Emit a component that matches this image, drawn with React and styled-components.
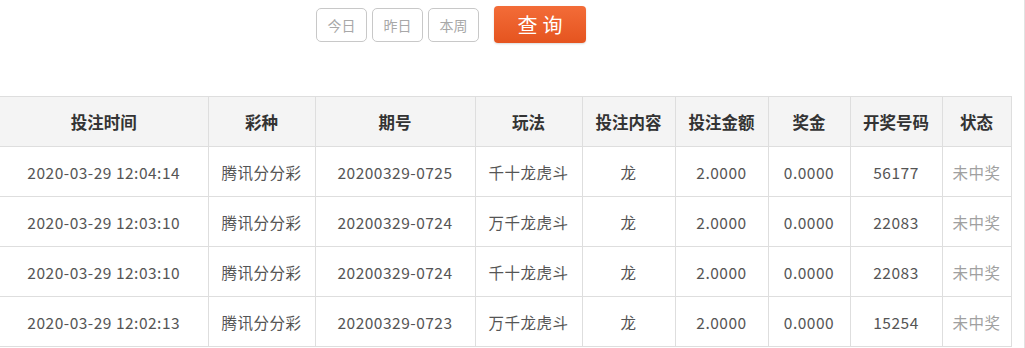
import React from "react";
import styled, { createGlobalStyle } from "styled-components";

const Global = createGlobalStyle`
  html, body { margin: 0; padding: 0; background: #fff; }
  body { font-family: "Noto Sans CJK SC", "Noto Sans", sans-serif; }
`;

const Page = styled.div`
  width: 1024px;
  height: 348px;
  border-right: 1px solid #e2e2e2;
  overflow: hidden;
`;

const Toolbar = styled.div`
  display: flex;
  align-items: center;
  height: 48px;
  padding-left: 316px;
  gap: 5px;
`;

const DayButton = styled.button`
  width: 51px;
  height: 34px;
  margin-top: 1px;
  border: 1px solid #c8c8c8;
  border-radius: 5px;
  background: #fff;
  color: #a8a8a8;
  font-family: "Noto Sans CJK SC", sans-serif;
  font-size: 14px;
  padding: 0;
`;

const QueryButton = styled.button`
  margin-left: 10px;
  width: 92px;
  height: 37px;
  border: none;
  border-radius: 4px;
  background: linear-gradient(#f36c38, #e5541f);
  box-shadow: 0 1px 2px rgba(0,0,0,0.15);
  color: #fff;
  font-family: "Noto Sans CJK SC", sans-serif;
  font-size: 20px;
  letter-spacing: 5px;
  padding: 0 0 0 5px;
`;

const Table = styled.table`
  margin-top: 48px;
  width: 1011px;
  border-collapse: collapse;
  table-layout: fixed;
`;

const Th = styled.th`
  height: 49px;
  padding: 0;
  background: #f4f4f4;
  border: 1px solid #dedede;
  color: #333;
  font-size: 16.5px;
  font-weight: 700;
  text-align: center;
  &:first-child { border-left: none; }
`;

const Td = styled.td`
  height: 49px;
  padding: 0;
  border: 1px solid #dedede;
  color: ${(p) => (p.$muted ? "#a0a0a0" : "#555")};
  font-size: 15.5px;
  letter-spacing: 0.5px;
  text-align: center;
  &:first-child { border-left: none; }
`;

const widths = [208, 107, 160, 107, 93, 93, 82, 92, 69];
const headers = ["投注时间", "彩种", "期号", "玩法", "投注内容", "投注金额", "奖金", "开奖号码", "状态"];
const rows = [
  ["2020-03-29 12:04:14", "腾讯分分彩", "20200329-0725", "千十龙虎斗", "龙", "2.0000", "0.0000", "56177", "未中奖"],
  ["2020-03-29 12:03:10", "腾讯分分彩", "20200329-0724", "万千龙虎斗", "龙", "2.0000", "0.0000", "22083", "未中奖"],
  ["2020-03-29 12:03:10", "腾讯分分彩", "20200329-0724", "千十龙虎斗", "龙", "2.0000", "0.0000", "22083", "未中奖"],
  ["2020-03-29 12:02:13", "腾讯分分彩", "20200329-0723", "万千龙虎斗", "龙", "2.0000", "0.0000", "15254", "未中奖"],
];

export default function App() {
  return (
    <Page>
      <Global />
      <Toolbar>
        <DayButton>今日</DayButton>
        <DayButton>昨日</DayButton>
        <DayButton>本周</DayButton>
        <QueryButton>查询</QueryButton>
      </Toolbar>
      <Table>
        <colgroup>
          {widths.map((w, i) => (
            <col key={i} style={{ width: w }} />
          ))}
        </colgroup>
        <thead>
          <tr>
            {headers.map((h) => (
              <Th key={h}>{h}</Th>
            ))}
          </tr>
        </thead>
        <tbody>
          {rows.map((r, i) => (
            <tr key={i}>
              {r.map((c, j) => (
                <Td key={j} $muted={j === 8}>{c}</Td>
              ))}
            </tr>
          ))}
        </tbody>
      </Table>
    </Page>
  );
}
